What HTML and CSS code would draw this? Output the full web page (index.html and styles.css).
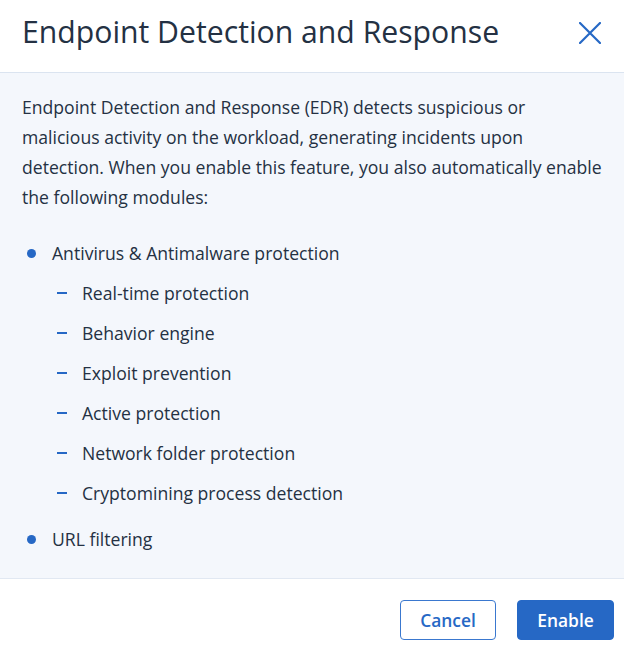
FILE: index.html
```html
<!DOCTYPE html>
<html lang="en">
<head>
<meta charset="utf-8">
<title>Endpoint Detection and Response</title>
<link rel="stylesheet" href="styles.css">
</head>
<body>
<div class="dialog">
  <header class="dialog-header">
    <h1 class="dialog-title">Endpoint Detection and Response</h1>
    <button class="close-btn" aria-label="Close">
      <svg width="22" height="22" viewBox="0 0 22 22"><path d="M1 1 L21 21 M21 1 L1 21" stroke="#2668c5" stroke-width="2.2" stroke-linecap="round" fill="none"/></svg>
    </button>
  </header>
  <main class="dialog-body">
    <p class="intro">Endpoint Detection and Response (EDR) detects suspicious or<br>malicious activity on the workload, generating incidents upon<br>detection. When you enable this feature, you also automatically enable<br>the following modules:</p>
    <ul class="modules">
      <li class="module">
        <span class="module-name">Antivirus &amp; Antimalware protection</span>
        <ul class="submodules">
          <li>Real-time protection</li>
          <li>Behavior engine</li>
          <li>Exploit prevention</li>
          <li>Active protection</li>
          <li>Network folder protection</li>
          <li>Cryptomining process detection</li>
        </ul>
      </li>
      <li class="module"><span class="module-name">URL filtering</span></li>
    </ul>
  </main>
  <footer class="dialog-footer">
    <button class="btn btn-secondary">Cancel</button>
    <button class="btn btn-primary">Enable</button>
  </footer>
</div>
</body>
</html>
```
FILE: styles.css
```css
* { box-sizing: border-box; }
html, body { margin: 0; padding: 0; background: #ffffff; }
body {
  font-family: "Open Sans", "Noto Sans", sans-serif;
  color: #243143;
  width: 624px;
  height: 652px;
  overflow: hidden;
}
.dialog { display: flex; flex-direction: column; height: 652px; }
.dialog-header {
  height: 73px;
  display: flex;
  align-items: flex-start;
  justify-content: space-between;
  padding: 14px 23px 0 22px;
  border-bottom: 1px solid #dbe4f0;
  background: #ffffff;
}
.dialog-title {
  margin: 0;
  font-size: 30.2px;
  font-weight: 400;
  line-height: 36px;
  color: #243143;
}
.close-btn {
  border: 0;
  background: none;
  padding: 0;
  width: 22px;
  height: 22px;
  display: flex;
  cursor: pointer;
  margin-top: 8px;
}
.dialog-body {
  background: #f4f7fc;
  padding: 19px 10px 27px 22px;
  border-bottom: 1px solid #e1e8f2;
}
.intro {
  margin: 0;
  font-size: 17.6px;
  line-height: 30px;
  white-space: nowrap;
}
.modules {
  list-style: none;
  margin: 29px 0 0 0;
  padding: 0;
  display: flex;
  flex-direction: column;
  gap: 22px;
}
.module { font-size: 17.6px; line-height: 24px; }
.module-name {
  display: flex;
  align-items: center;
}
.module-name::before {
  content: "";
  width: 9px;
  height: 9px;
  border-radius: 50%;
  background: #2668c5;
  margin: 0 16px 0 5px;
  flex: none;
}
.submodules {
  list-style: none;
  margin: 16px 0 0 0;
  padding: 0 0 0 35px;
  display: flex;
  flex-direction: column;
  gap: 16px;
}
.submodules li {
  display: flex;
  align-items: center;
}
.submodules li::before {
  content: "";
  width: 10px;
  height: 2px;
  background: #2668c5;
  margin: 0 15px 0 0;
  flex: none;
}
.dialog-footer {
  flex: 1;
  display: flex;
  justify-content: flex-end;
  align-items: flex-start;
  gap: 21px;
  padding: 21px 10px 0 0;
  background: #ffffff;
}
.btn {
  height: 40px;
  border-radius: 4px;
  font-family: "Open Sans", "Noto Sans", sans-serif;
  font-size: 17.4px;
  font-weight: 600;
  cursor: pointer;
}
.btn-secondary {
  width: 96px;
  background: #ffffff;
  color: #2668c5;
  border: 1px solid #3a78cf;
}
.btn-primary {
  width: 97px;
  background: #2668c5;
  color: #ffffff;
  border: 1px solid #2668c5;
}
```
